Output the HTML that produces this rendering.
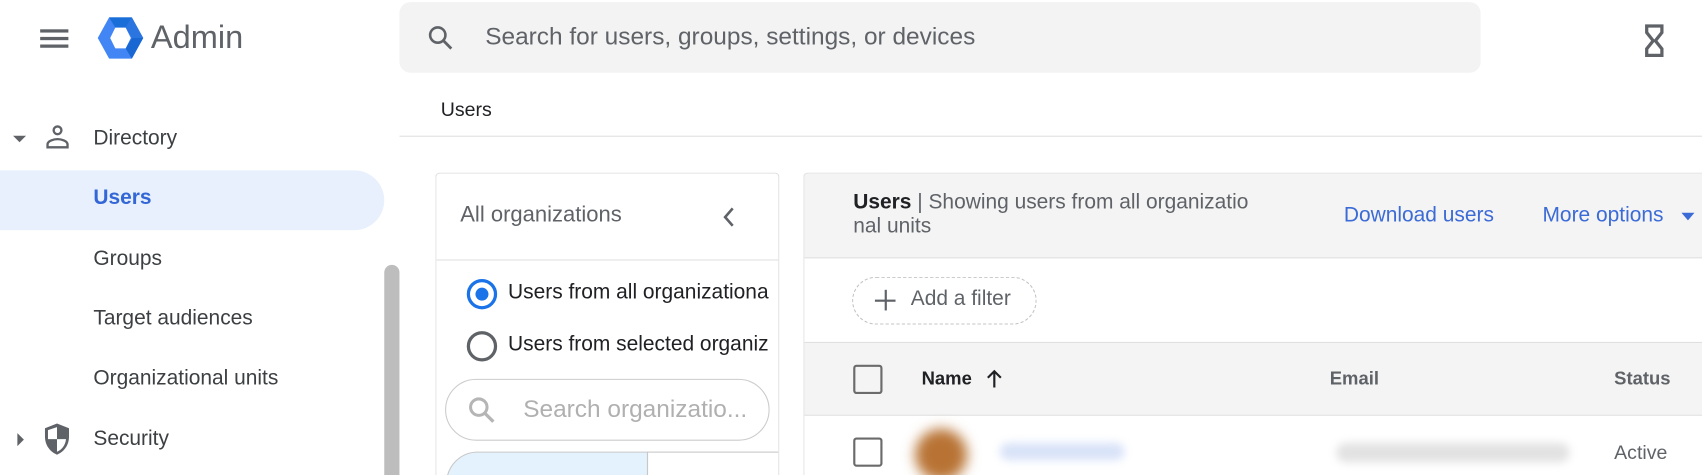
<!DOCTYPE html>
<html><head><style>
*{margin:0;padding:0;box-sizing:border-box}
html,body{width:1702px;height:475px;overflow:hidden}
body{background:#fff;font-family:"Liberation Sans",sans-serif;position:relative;color:#3c4043}
#w{position:absolute;left:0;top:0;width:1568px;height:438px;transform:scale(1.0855);transform-origin:0 0;overflow:hidden}
.a{position:absolute;white-space:nowrap}
.nav{font-size:19.3px;color:#3c4043;left:86px}
</style></head><body><div id="w">
<!-- hamburger -->
<div class="a" style="left:37px;top:27px;width:26px;height:3px;background:#5f6368"></div>
<div class="a" style="left:37px;top:34px;width:26px;height:3px;background:#5f6368"></div>
<div class="a" style="left:37px;top:41px;width:26px;height:3px;background:#5f6368"></div>
<!-- logo -->
<svg class="a" style="left:89px;top:15px" width="44" height="40" viewBox="0 0 46 42">
<polygon points="12,1 34,1 45,21 34,41 12,41 1,21" fill="#4285f4"/>
<polygon points="12,1 34,1 28,11 18,11" fill="#1a6ed8"/>
<polygon points="34,1 45,21 34,21 28,11" fill="#2a75e0"/>
<polygon points="45,21 34,41 28,31 34,21" fill="#1967d2"/>
<polygon points="18,11 28,11 33,21 28,31 18,31 13,21" fill="#fff"/>
</svg>
<div class="a" style="left:139px;top:18px;font-size:30px;color:#5f6368">Admin</div>
<!-- search -->
<div class="a" style="left:368px;top:2px;width:996px;height:65px;background:#f3f3f3;border-radius:10px"></div>
<svg class="a" style="left:393px;top:22px" width="26" height="26" viewBox="0 0 24 24"><circle cx="9.5" cy="9.5" r="6.5" fill="none" stroke="#5f6368" stroke-width="2.2"/><line x1="14.5" y1="14.5" x2="21" y2="21" stroke="#5f6368" stroke-width="2.4"/></svg>
<div class="a" style="left:447px;top:21px;font-size:22.5px;color:#5f6368">Search for users, groups, settings, or devices</div>
<!-- hourglass -->
<svg class="a" style="left:1514px;top:22px" width="20" height="31" viewBox="0 0 20 31"><path d="M3 2H17V8L11 15.5L17 23V29H3V23L9 15.5L3 8Z" fill="none" stroke="#5f6368" stroke-width="3"/></svg>
<!-- breadcrumb -->
<div class="a" style="left:406px;top:91px;font-size:18px;color:#202124">Users</div>
<div class="a" style="left:368px;top:125px;width:1334px;height:1px;background:#e0e0e0"></div>
<!-- sidebar -->
<div class="a" style="left:12px;top:125px;width:0;height:0;border-left:6px solid transparent;border-right:6px solid transparent;border-top:6px solid #5f6368"></div>
<svg class="a" style="left:40px;top:113px" width="26" height="26" viewBox="0 0 24 24"><circle cx="12" cy="6.5" r="3.3" fill="none" stroke="#5f6368" stroke-width="2"/><path d="M3.5 21V18.5C3.5 15.5 9 14 12 14S20.5 15.5 20.5 18.5V21Z" fill="none" stroke="#5f6368" stroke-width="2"/></svg>
<div class="a nav" style="top:117px">Directory</div>
<div class="a" style="left:0;top:157px;width:354px;height:55px;background:#e8f0fe;border-radius:0 28px 28px 0"></div>
<div class="a nav" style="top:172px;color:#3367d6;font-weight:bold">Users</div>
<div class="a nav" style="top:228px">Groups</div>
<div class="a nav" style="top:283px">Target audiences</div>
<div class="a nav" style="top:338px">Organizational units</div>
<div class="a" style="left:16px;top:399px;width:0;height:0;border-top:6px solid transparent;border-bottom:6px solid transparent;border-left:6px solid #5f6368"></div>
<svg class="a" style="left:39px;top:389px" width="27" height="31" viewBox="0 0 24 28"><path d="M12 1L2 5V12C2 19 6 24.5 12 27C18 24.5 22 19 22 12V5Z" fill="#5f6368"/><path d="M12 4V14H19.5C19 19 16 23 12 24.5V14H4.5V6.5Z" fill="#fff"/></svg>
<div class="a nav" style="top:394px">Security</div>
<div class="a" style="left:354px;top:244px;width:14px;height:194px;background:#bdbdbd;border-radius:7px 7px 0 0"></div>
<!-- left panel -->
<div class="a" style="left:401px;top:159px;width:317px;height:279px;border:1px solid #e0e0e0;border-bottom:none;border-radius:4px 4px 0 0;overflow:hidden">
 <div class="a" style="left:22px;top:27px;font-size:20.3px;color:#5f6368">All organizations</div>
 <svg class="a" style="left:262px;top:29px" width="14" height="22" viewBox="0 0 14 22"><path d="M11 3L4 11L11 19" fill="none" stroke="#5f6368" stroke-width="2.4"/></svg>
 <div class="a" style="left:0;top:79px;width:317px;height:1px;background:#e0e0e0"></div>
 <div class="a" style="left:28px;top:97px;width:28px;height:28px;border:3px solid #1a73e8;border-radius:50%"></div>
 <div class="a" style="left:36px;top:105px;width:12px;height:12px;background:#1a73e8;border-radius:50%"></div>
 <div class="a" style="left:66px;top:99px;font-size:19.3px;color:#202124">Users from all organizationa</div>
 <div class="a" style="left:28px;top:145px;width:28px;height:28px;border:3px solid #5f6368;border-radius:50%"></div>
 <div class="a" style="left:66px;top:147px;font-size:19.3px;color:#202124">Users from selected organiz</div>
 <div class="a" style="left:8px;top:189px;width:299px;height:57px;border:1px solid #ccc;border-radius:29px"></div>
 <svg class="a" style="left:28px;top:204px" width="28" height="28" viewBox="0 0 24 24"><circle cx="9.5" cy="9.5" r="6.5" fill="none" stroke="#b5b5b5" stroke-width="2.4"/><line x1="14.5" y1="14.5" x2="21" y2="21" stroke="#b5b5b5" stroke-width="2.6"/></svg>
 <div class="a" style="left:80px;top:204px;font-size:22.5px;color:#b0b0b0">Search organizatio...</div>
 <div class="a" style="left:9px;top:256px;width:186px;height:70px;background:#e3f2fd;border:1px solid #c8c8c8;border-radius:29px 0 0 0"></div>
 <div class="a" style="left:194px;top:256px;width:130px;height:70px;border:1px solid #c8c8c8"></div>
</div>
<!-- right panel -->
<div class="a" style="left:740px;top:159px;width:980px;height:279px;border:1px solid #e0e0e0;border-bottom:none;border-radius:4px 4px 0 0;overflow:hidden">
 <div class="a" style="left:0;top:0;width:980px;height:78px;background:#f4f4f4;border-bottom:1px solid #e0e0e0"></div>
 <div class="a" style="left:45px;top:16px;font-size:19.3px;line-height:22px;color:#5f6368"><span style="color:#202124;font-weight:bold">Users</span> | Showing users from all organizatio<br>nal units</div>
 <div class="a" style="left:497px;top:28px;font-size:19.3px;color:#3b6bd6">Download users</div>
 <div class="a" style="left:680px;top:28px;font-size:19.3px;color:#3b6bd6">More options</div>
 <div class="a" style="left:808px;top:36px;width:0;height:0;border-left:6px solid transparent;border-right:6px solid transparent;border-top:7px solid #3b6bd6"></div>
 <div class="a" style="left:44px;top:95px;width:170px;height:44px;border:1px dashed #c4c4c4;border-radius:22px"></div>
 <div class="a" style="left:65px;top:116px;width:19px;height:2px;background:#5f6368"></div>
 <div class="a" style="left:74px;top:107px;width:2px;height:19px;background:#5f6368"></div>
 <div class="a" style="left:98px;top:105px;font-size:19.3px;color:#5f6368">Add a filter</div>
 <div class="a" style="left:0;top:155px;width:980px;height:68px;background:#f4f4f4;border-top:1px solid #e0e0e0;border-bottom:1px solid #e0e0e0"></div>
 <div class="a" style="left:45px;top:176px;width:27px;height:27px;border:2.5px solid #6b6b6b;border-radius:3px"></div>
 <div class="a" style="left:108px;top:179px;font-size:17px;font-weight:bold;color:#202124">Name</div>
 <svg class="a" style="left:167px;top:180px" width="16" height="18" viewBox="0 0 16 18"><path d="M8 17V2M2 8L8 2L14 8" fill="none" stroke="#202124" stroke-width="2"/></svg>
 <div class="a" style="left:484px;top:179px;font-size:17px;font-weight:bold;color:#5f6368">Email</div>
 <div class="a" style="left:746px;top:179px;font-size:17px;font-weight:bold;color:#5f6368">Status</div>
 <div class="a" style="left:45px;top:243px;width:27px;height:27px;border:2.5px solid #6b6b6b;border-radius:3px"></div>
 <div class="a" style="left:102px;top:235px;width:48px;height:48px;background:#b87334;border-radius:50%;filter:blur(6px)"></div>
 <div class="a" style="left:180px;top:248px;width:115px;height:16px;background:#d9e3f8;border-radius:8px;filter:blur(4px)"></div>
 <div class="a" style="left:490px;top:248px;width:215px;height:18px;background:#e2e2e2;border-radius:9px;filter:blur(4px)"></div>
 <div class="a" style="left:746px;top:247px;font-size:18px;color:#5f6368">Active</div>
</div>
</div></body></html>
